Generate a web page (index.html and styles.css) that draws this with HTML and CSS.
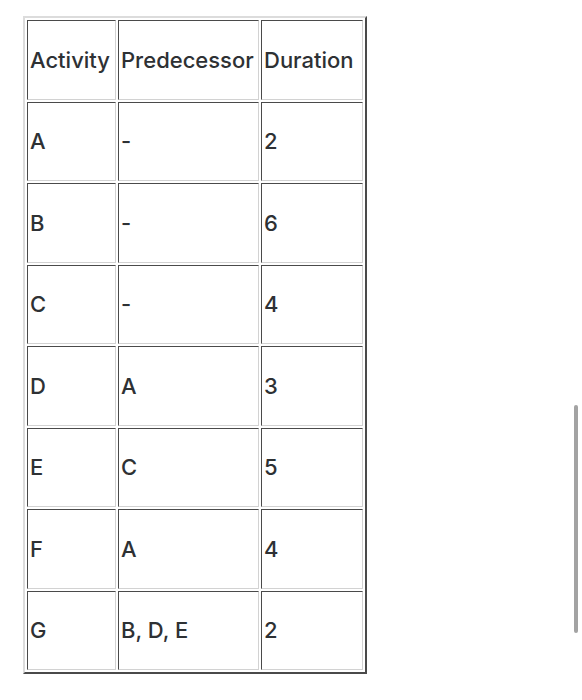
FILE: index.html
```html
<!DOCTYPE html>
<html>
<head>
<meta charset="utf-8">
<link rel="stylesheet" href="styles.css">
</head>
<body>
<div class="page">
  <table class="grid">
    <tr><td class="c1">Activity</td><td class="c2">Predecessor</td><td class="c3">Duration</td></tr>
    <tr><td>A</td><td>-</td><td>2</td></tr>
    <tr><td>B</td><td>-</td><td>6</td></tr>
    <tr><td>C</td><td>-</td><td>4</td></tr>
    <tr><td>D</td><td>A</td><td>3</td></tr>
    <tr><td>E</td><td>C</td><td>5</td></tr>
    <tr><td>F</td><td>A</td><td>4</td></tr>
    <tr><td>G</td><td>B, D, E</td><td>2</td></tr>
  </table>
</div>
<div class="scrollbar"></div>
</body>
</html>
```

FILE: styles.css
```css
html, body {
  margin: 0;
  padding: 0;
  background: #ffffff;
}
.page {
  padding: 16px 0 0 23px;
}
.grid {
  border-collapse: separate;
  border-spacing: 2px;
  border-style: solid;
  border-width: 2px;
  border-color: #dcdcdc #4a4a4a #4a4a4a #dcdcdc;
  font-family: Inter, "Liberation Sans", sans-serif;
  font-size: 22px;
  font-weight: 500;
  color: #2e3134;
}
.grid td {
  box-sizing: border-box;
  height: 79.5px;
  padding: 0 2px;
  vertical-align: middle;
  text-align: left;
  white-space: nowrap;
  border-style: solid;
  border-width: 1px;
  border-color: #4a4a4a #d2d2d2 #d2d2d2 #4a4a4a;
}
.grid .c1 { width: 89px; }
.grid .c2 { width: 141px; }
.grid .c3 { width: 102px; }
.scrollbar {
  position: absolute;
  left: 574px;
  top: 405px;
  width: 4px;
  height: 228px;
  border-radius: 2px;
  background: #a3a3a3;
}
```
